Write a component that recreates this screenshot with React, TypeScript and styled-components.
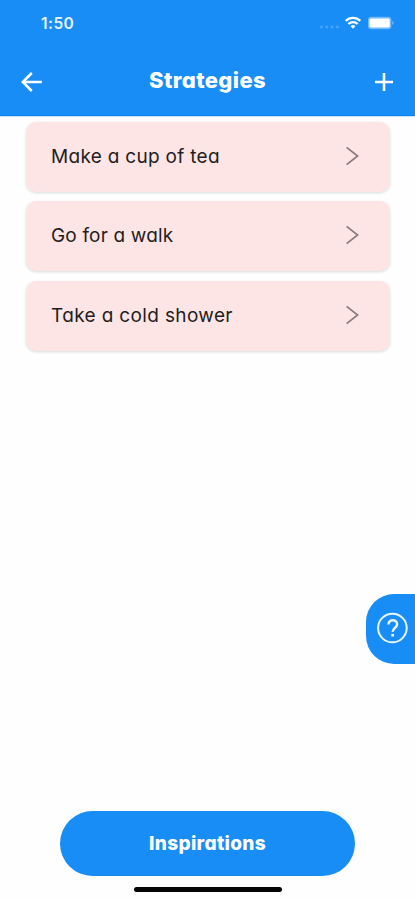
import React from 'react';
import styled, { createGlobalStyle } from 'styled-components';

const BLUE = '#198df6';

const GlobalStyle = createGlobalStyle`
  * { box-sizing: border-box; }
  body {
    margin: 0;
    background: #fefefe;
    font-family: Inter, "Open Sans", sans-serif;
    font-feature-settings: "cv11", "ss03";
  }
  button { font: inherit; font-feature-settings: inherit; border: 0; padding: 0; background: none; color: inherit; }
  svg { display: block; }
`;

const Screen = styled.main`
  position: relative;
  display: flex;
  flex-direction: column;
  width: 415px;
  height: 900px;
  overflow: hidden;
  background: #fefefe;
`;

const Header = styled.header`
  height: 116px;
  flex: none;
  background: ${BLUE};
  box-shadow: inset 0 -1px 0 #0f84f0, 0 1px 0 #c4e2fc;
  color: #fff;
`;

const StatusBar = styled.div`
  display: flex;
  align-items: center;
  justify-content: space-between;
  height: 46px;
  padding: 0 20px 0 41px;
`;

const Clock = styled.span`
  font-size: 15.5px;
  font-weight: 600;
  letter-spacing: 0.45px;
  font-feature-settings: normal;
  color: #e6f4ff;
`;

const NavBar = styled.div`
  display: grid;
  grid-template-columns: 30px 1fr 30px;
  align-items: center;
  height: 71px;
  padding: 0 16px;
`;

const IconButton = styled.button`
  display: flex;
  justify-content: center;
  width: 30px;
`;

const Title = styled.h1`
  margin: 0;
  padding-bottom: 3px;
  text-align: center;
  font-size: 22px;
  line-height: 28px;
  font-weight: 800;
  letter-spacing: 0.4px;
`;

const List = styled.ul`
  flex: 1;
  display: flex;
  flex-direction: column;
  gap: 9.3px;
  margin: 0;
  padding: 6px 25px 0 26px;
  list-style: none;
`;

const Card = styled.li`
  display: flex;
  align-items: center;
  justify-content: space-between;
  height: 70px;
  padding: 0 31px 2px 25px;
  border-radius: 10px;
  background: #fee5e5;
  box-shadow: 0 1px 3px rgba(60, 80, 80, 0.2);
`;

const Label = styled.span<{ $tracking: number }>`
  padding-top: 2px;
  font-size: 19px;
  line-height: 26px;
  font-weight: 400;
  letter-spacing: ${({ $tracking }) => $tracking}px;
  color: #231d20;
  white-space: nowrap;
`;

const HelpTab = styled.button`
  position: absolute;
  right: 0;
  top: 594px;
  display: flex;
  align-items: center;
  width: 49px;
  height: 69.5px;
  padding: 0 0 1px 10px;
  border-radius: 28px 0 0 28px;
  background: ${BLUE};
`;

const Footer = styled.footer`
  display: flex;
  flex-direction: column;
  align-items: center;
  gap: 11px;
  padding-bottom: 8px;
`;

const PrimaryButton = styled.button`
  width: 295px;
  height: 65px;
  border-radius: 33px;
  background: ${BLUE};
  color: #fff;
  font-size: 19px;
  font-weight: 800;
  letter-spacing: 0.35px;
`;

const HomeIndicator = styled.div`
  width: 148px;
  height: 5px;
  border-radius: 3px;
  background: #050505;
`;

const StatusIcons = () => (
  <svg width="80" height="18" viewBox="315 14 80 18" fill="none">
    <g fill="#fff" fillOpacity=".22">
      <circle cx="321.5" cy="27" r="1.4" />
      <circle cx="326.8" cy="27" r="1.4" />
      <circle cx="332.1" cy="27" r="1.4" />
      <circle cx="337.4" cy="27" r="1.4" />
    </g>
    <g stroke="#fff" strokeWidth="2.2">
      <path d="M345.7 20.9a10.3 10.3 0 0 1 14.6 0" />
      <path d="M348.4 24a6.5 6.5 0 0 1 9.2 0" />
    </g>
    <path d="M350.6 26.2a3.4 3.4 0 0 1 4.8 0l-2.4 2.6z" fill="#fff" />
    <rect x="368" y="16.8" width="23.4" height="12.4" rx="3.2" fill="#fff" fillOpacity=".38" />
    <rect x="369.5" y="18.6" width="20.3" height="9" rx="1.5" fill="#fff" />
    <path d="M392.3 21v4c1.6-.6 1.6-3.4 0-4z" fill="#fff" fillOpacity=".5" />
  </svg>
);

const BackIcon = () => (
  <svg width="24" height="24" viewBox="0 0 24 24" fill="none" stroke="#fff" strokeWidth="2.5">
    <path d="M22.8 12H4M12.8 3 3.8 12l9 9" />
  </svg>
);

const PlusIcon = () => (
  <svg width="24" height="24" viewBox="0 0 24 24" fill="none" stroke="#fff" strokeWidth="2.6">
    <path d="M12 3v18M3 12h18" />
  </svg>
);

const ChevronIcon = () => (
  <svg width="14" height="20" viewBox="0 0 14 20" fill="none" stroke="#8d7b7d" strokeWidth="1.8">
    <path d="m1.6 1.4 11 8.6-11 8.6" />
  </svg>
);

const HelpIcon = () => (
  <svg width="32" height="32" viewBox="0 0 32 32" fill="none" stroke="#e9f5ff">
    <circle cx="16.4" cy="16" r="14.3" strokeWidth="2" />
    <path d="M12.5 12.4c0-5.6 8.6-5.2 8.6-.2 0 3.6-4.4 3.9-4.4 7.6" strokeWidth="2.5" />
    <path d="M16.7 21.9v2.6" strokeWidth="2.7" />
  </svg>
);

const strategies = [
  { name: 'Make a cup of tea', tracking: 0.3 },
  { name: 'Go for a walk', tracking: 0.18 },
  { name: 'Take a cold shower', tracking: 0.36 },
];

export default function App() {
  return (
    <>
      <GlobalStyle />
      <Screen>
        <Header>
          <StatusBar>
            <Clock>1:50</Clock>
            <StatusIcons />
          </StatusBar>
          <NavBar>
            <IconButton aria-label="Back"><BackIcon /></IconButton>
            <Title>Strategies</Title>
            <IconButton aria-label="Add strategy"><PlusIcon /></IconButton>
          </NavBar>
        </Header>
        <List>
          {strategies.map(({ name, tracking }) => (
            <Card key={name}>
              <Label $tracking={tracking}>{name}</Label>
              <ChevronIcon />
            </Card>
          ))}
        </List>
        <HelpTab aria-label="Help"><HelpIcon /></HelpTab>
        <Footer>
          <PrimaryButton>Inspirations</PrimaryButton>
          <HomeIndicator />
        </Footer>
      </Screen>
    </>
  );
}
